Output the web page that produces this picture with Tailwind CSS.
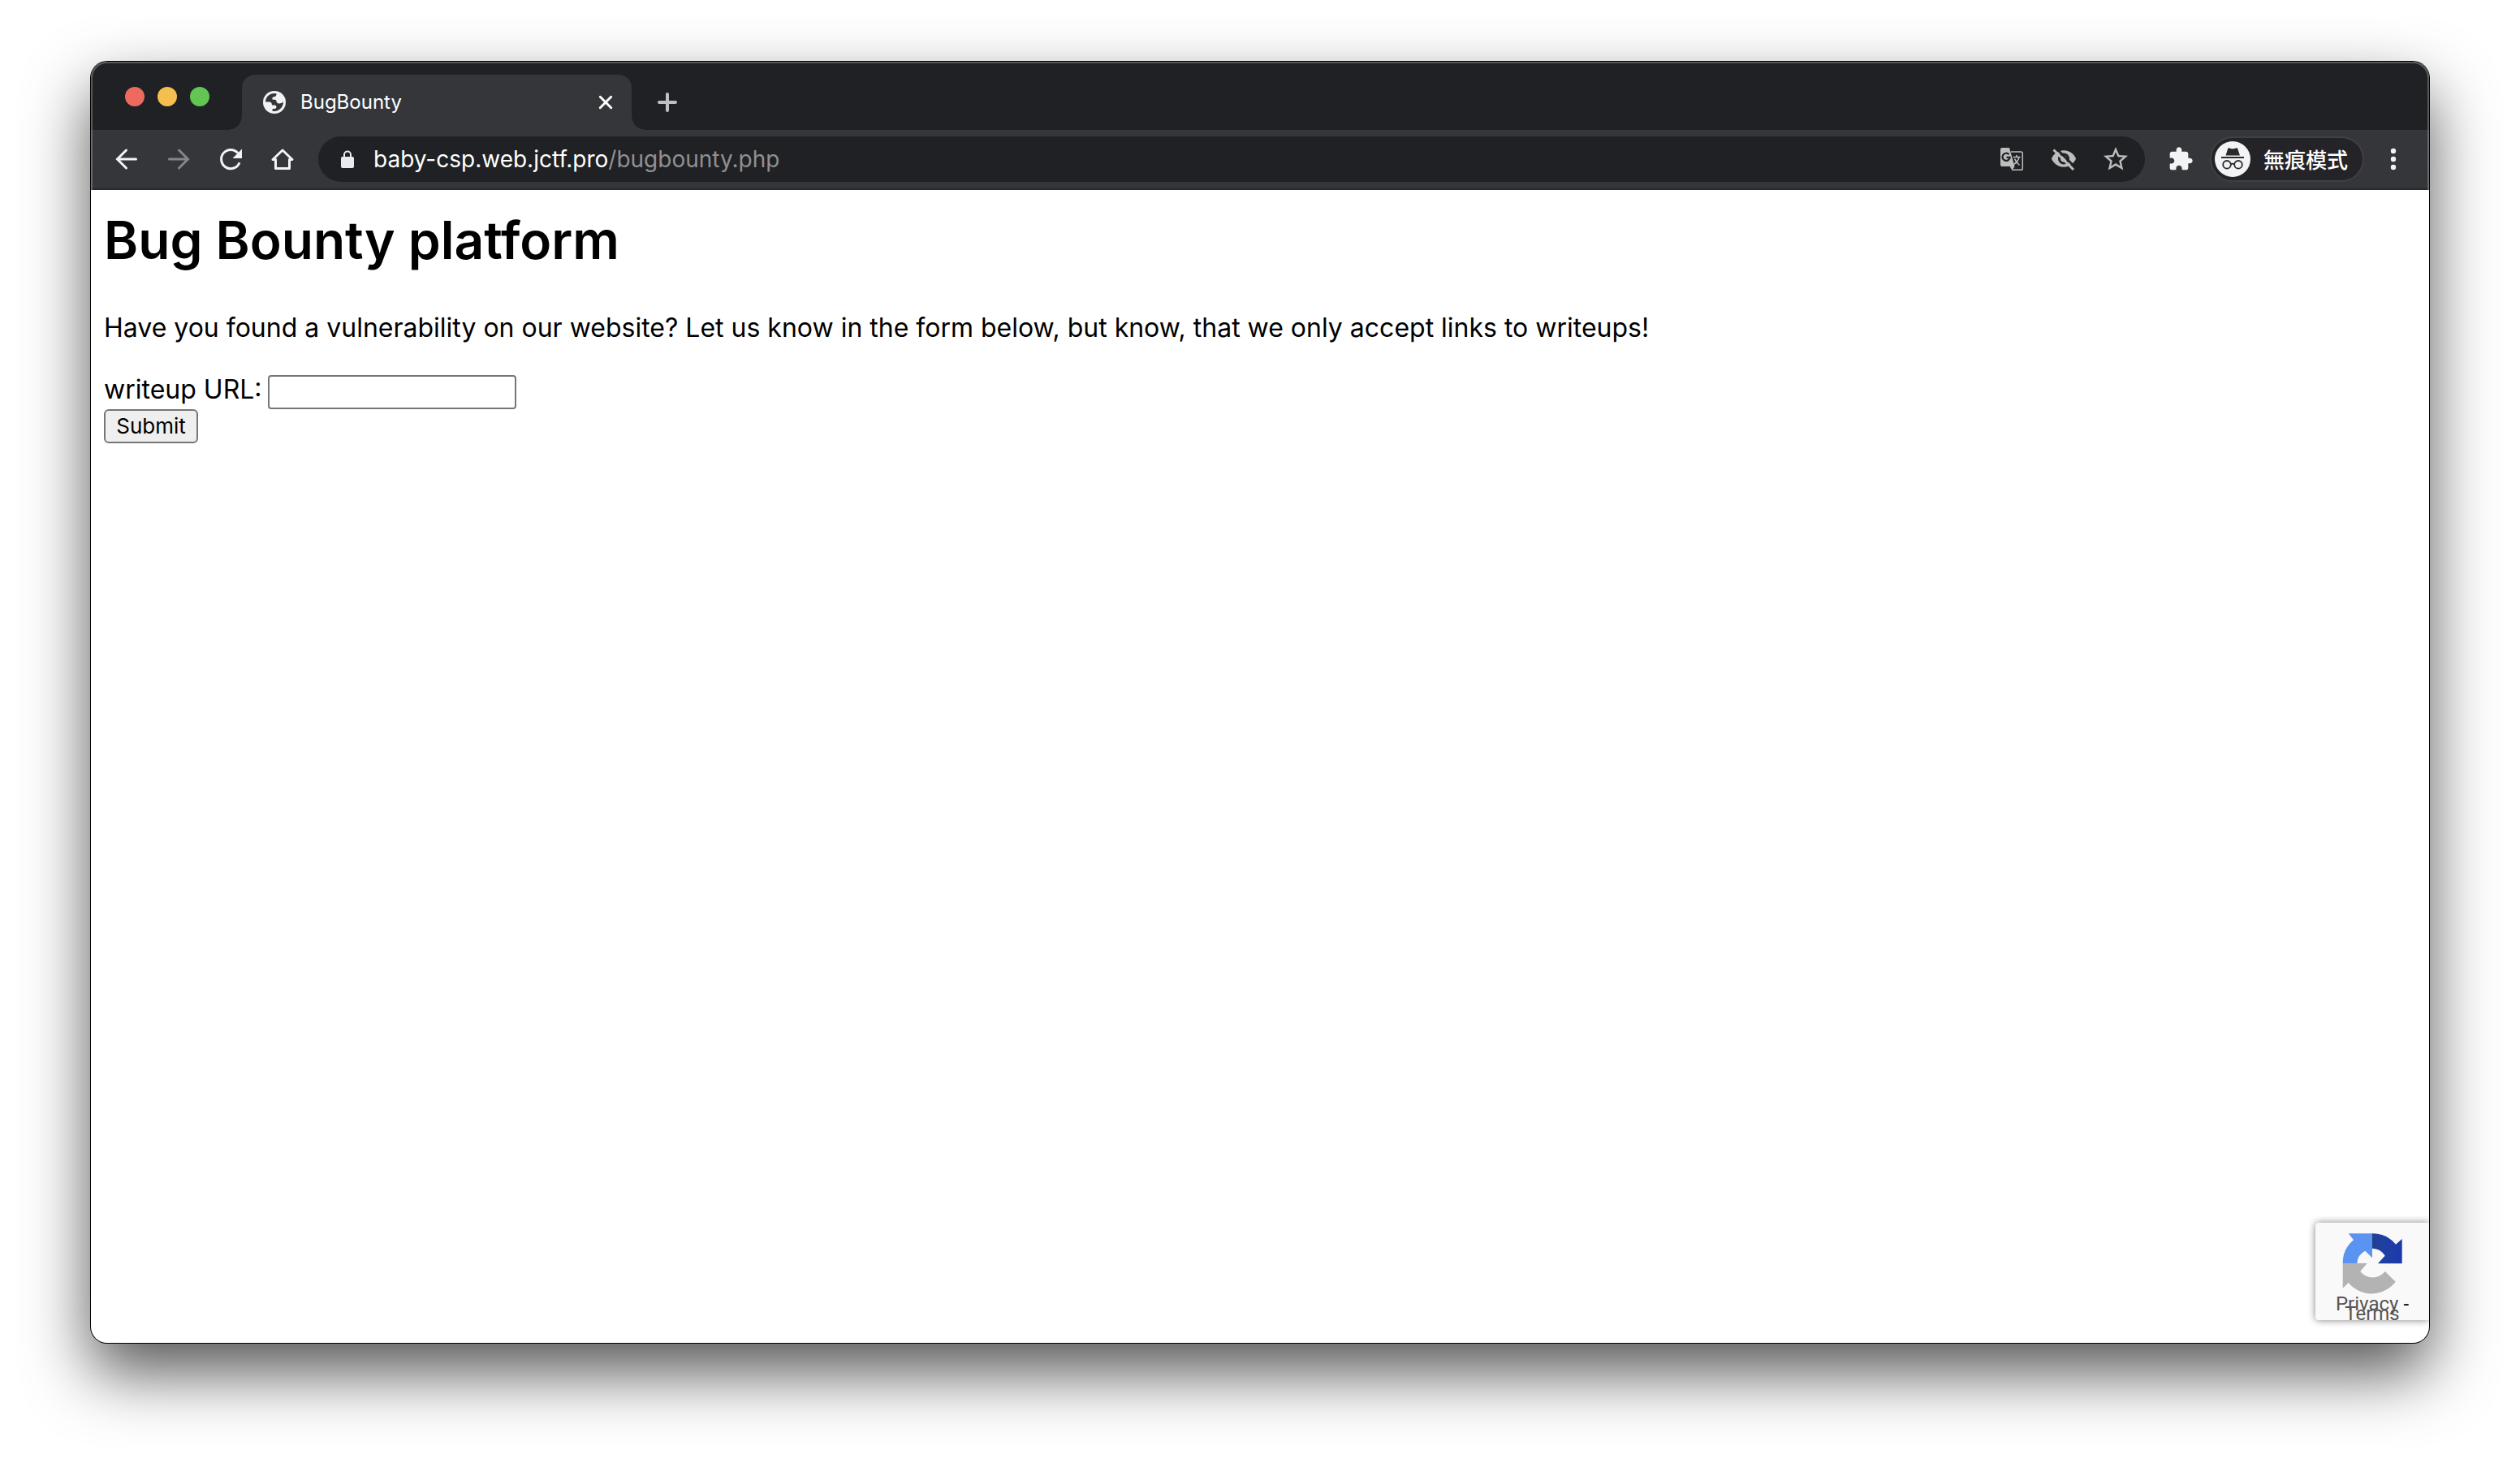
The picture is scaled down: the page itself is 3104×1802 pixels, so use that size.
<!DOCTYPE html>
<html lang="en">
<head>
<meta charset="utf-8">
<title>BugBounty</title>
<script src="https://cdn.jsdelivr.net/npm/@tailwindcss/browser@4"></script>
</head>
<body class="flex min-h-screen flex-col bg-white px-28 pt-[76px] pb-[148px] font-['Inter','Noto_Sans_CJK_TC',sans-serif] text-black">

<div class="relative flex grow flex-col overflow-hidden rounded-[20px] bg-white shadow-[0_0_0_1px_#000,0_36px_80px_rgba(0,0,0,0.67)]">

  <header class="relative">
    <!-- Tab strip -->
    <div class="flex h-[84px] items-center bg-[#202124] pl-[42px]">
      <div class="flex gap-4 pt-0.5">
        <button type="button" aria-label="Close window" class="size-6 rounded-full bg-[#ed6a5e]"></button>
        <button type="button" aria-label="Minimize window" class="size-6 rounded-full bg-[#f5bf4f]"></button>
        <button type="button" aria-label="Zoom window" class="size-6 rounded-full bg-[#62c554]"></button>
      </div>
      <div class="relative ml-10 flex h-[68px] w-[480px] items-center self-end rounded-t-2xl bg-[#35363a] pr-5 pl-[26px]">
        <span class="absolute bottom-0 -left-4 size-4 bg-[radial-gradient(circle_at_0_0,transparent_15px,#35363a_16px)]"></span>
        <span class="absolute -right-4 bottom-0 size-4 bg-[radial-gradient(circle_at_100%_0,transparent_15px,#35363a_16px)]"></span>
        <svg class="size-7" viewBox="0 0 28 28">
          <circle cx="14" cy="14" r="14" fill="#f1f3f4"/>
          <path d="M3 13.6C3 7.600 8 3 14 3L16.500 3.200C16.800 5.600 15.600 7 13.600 7.200C11.800 7.400 11.300 8.200 11.300 10.600L14.500 10.800C16 11 16.400 12 16.600 13.400L18 15.200C20.500 15.800 23 15.400 25 13.600C25 20 20 25 14 25L11.500 24.700V22.300C13 21.900 15.800 22.600 16.400 20.300C16.600 18.600 16 17.600 14.200 17.500L11.500 17.400C10.600 17.200 10.800 15.500 10.200 14.600C9.500 13.700 8 13.600 3 13.600Z" fill="#35363a"/>
        </svg>
        <span class="ml-[18px] grow text-[24px] leading-8 text-white">BugBounty</span>
        <button type="button" aria-label="Close tab" class="size-6">
          <svg class="size-6" viewBox="0 0 24 24" fill="none" stroke="#fff" stroke-width="3" stroke-linecap="round"><path d="M5.300 5.300 18.700 18.700M18.700 5.300 5.300 18.700"/></svg>
        </button>
      </div>
      <button type="button" aria-label="New tab" class="mt-4 ml-[26px] size-9">
        <svg class="size-9" viewBox="0 0 36 36" fill="none" stroke="#bdc1c6" stroke-width="4" stroke-linecap="round"><path d="M18 8V28M8 18H28"/></svg>
      </button>
    </div>

    <!-- Toolbar -->
    <div class="flex h-[74px] items-center border-b-2 border-[#28292c] bg-[#35363a] px-[26px]">
      <nav class="flex gap-7">
        <button type="button" aria-label="Back" class="size-9">
          <svg class="size-9" viewBox="0 0 36 36" fill="none" stroke="#f1f3f4" stroke-width="3" stroke-linecap="round"><path d="M29.500 18H7M17.500 7 6.500 18 17.500 29"/></svg>
        </button>
        <button type="button" aria-label="Forward" class="size-9">
          <svg class="size-9" viewBox="0 0 36 36" fill="none" stroke="#85868a" stroke-width="3" stroke-linecap="round"><path d="M6.500 18H29M18.500 7 29.500 18 18.500 29"/></svg>
        </button>
        <button type="button" aria-label="Reload" class="size-9">
          <svg class="size-9" viewBox="0 0 36 36"><path d="M29 22.200A11.600 11.600 0 1 1 27 10.600" fill="none" stroke="#f1f3f4" stroke-width="3"/><path d="M32 5.500V17H20.500Z" fill="#f1f3f4"/></svg>
        </button>
        <button type="button" aria-label="Home" class="size-9">
          <svg class="size-9" viewBox="0 0 36 36" fill="none" stroke="#f1f3f4" stroke-width="3" stroke-linejoin="round"><path d="M6 18.500 18 7 30 18.500H26.500V29.500H9.500V18.500Z"/></svg>
        </button>
      </nav>

      <div class="ml-[26px] flex h-14 grow items-center rounded-full bg-[#202124] pr-[18px] pl-6">
        <svg class="size-6" viewBox="0 0 24 24"><rect x="4" y="9" width="16" height="14" rx="2" fill="#e8eaed"/><path d="M8 9.500V6.500A4 4 0 0 1 16 6.500V9.500" fill="none" stroke="#e8eaed" stroke-width="2"/></svg>
        <span class="ml-5 grow text-[28px] leading-9 text-white">baby-csp.web.jctf.pro<span class="text-[#8f9093]">/bugbounty.php</span></span>
        <div class="flex gap-7">
          <button type="button" aria-label="Translate this page" class="size-9">
            <svg class="size-9" viewBox="0 0 36 36">
              <path d="M17 9H29.500A1.800 1.800 0 0 1 31.300 10.800V29.500A1.800 1.800 0 0 1 29.500 31.300H19L16.500 27" fill="none" stroke="#bdbdbd" stroke-width="1.500"/>
              <path d="M6 4H15L21.500 27H6A2 2 0 0 1 4 25V6A2 2 0 0 1 6 4Z" fill="#bdbdbd"/>
              <path d="M17 27H21.500L19 31Z" fill="#bdbdbd"/>
              <path d="M14.500 12.200A4.600 4.600 0 1 0 15.700 15.800H11.500" fill="none" stroke="#202124" stroke-width="2.200"/>
              <path d="M19.500 15.500H28.500M23.800 13V15.500M27 15.500C26.200 19.500 23.500 22.500 20.500 24.500M21.500 17.500C22.500 20.500 25 23.500 27.500 25.500" fill="none" stroke="#bdbdbd" stroke-width="1.600"/>
            </svg>
          </button>
          <button type="button" aria-label="Third-party cookies blocked" class="size-9">
            <svg class="size-9" viewBox="0 0 36 36">
              <path d="M3 17.500C5.400 11.500 11.200 7.300 18 7.300S30.600 11.500 33 17.500C30.600 23.500 24.800 27.700 18 27.700S5.400 23.500 3 17.500Z" fill="#bdbdbd"/>
              <circle cx="18" cy="17.500" r="7" fill="#202124"/>
              <circle cx="18" cy="17.500" r="4" fill="#bdbdbd"/>
              <path d="M9 5 33 29" stroke="#202124" stroke-width="3"/>
              <path d="M5.500 6.500 30 31" stroke="#bdbdbd" stroke-width="3"/>
            </svg>
          </button>
          <button type="button" aria-label="Bookmark this tab" class="size-9">
            <svg class="size-9" viewBox="0 0 24 24" fill="#bdbdbd"><path d="M22 9.240l-7.190-.620L12 2 9.190 8.630 2 9.240l5.460 4.730L5.820 21 12 17.270 18.180 21l-1.630-7.030L22 9.240zM12 15.400l-3.760 2.270 1-4.280-3.320-2.880 4.380-.380L12 6.100l1.710 4.040 4.380.380-3.320 2.880 1 4.280L12 15.400z"/></svg>
          </button>
        </div>
      </div>

      <button type="button" aria-label="Extensions" class="ml-[26px] flex size-9 items-center justify-center">
        <svg class="size-8" viewBox="0 0 24 24" fill="#f1f3f4"><path d="M20.500 11H19V7c0-1.100-.900-2-2-2h-4V3.500C13 2.120 11.880 1 10.500 1S8 2.120 8 3.500V5H4c-1.100 0-1.990.900-1.990 2v3.800H3.500c1.490 0 2.700 1.210 2.700 2.700s-1.210 2.700-2.700 2.700H2V20c0 1.100.900 2 2 2h3.800v-1.500c0-1.490 1.210-2.700 2.700-2.700 1.490 0 2.700 1.210 2.700 2.700V22H17c1.100 0 2-.900 2-2v-4h1.500c1.380 0 2.500-1.120 2.500-2.500S21.880 11 20.500 11z"/></svg>
      </button>
      <button type="button" class="ml-[18px] flex h-14 w-[190px] items-center rounded-full border-2 border-[#3f4045] bg-[#242428] pl-1">
        <svg class="size-11" viewBox="0 0 44 44">
          <circle cx="22" cy="22" r="22" fill="#f1f3f4"/>
          <path d="M18 8.500C19.500 9.500 24.500 9.500 26 8.500C27.300 8 28 8.500 28.400 9.700L31 17.500H13.500L16 9.700C16.400 8.500 17 8 18 8.500Z" fill="#28292c"/>
          <path d="M8 20H36" stroke="#28292c" stroke-width="2"/>
          <g fill="none" stroke="#28292c" stroke-width="1.800"><circle cx="15" cy="28.800" r="4.800"/><circle cx="29" cy="28.800" r="4.800"/><path d="M19.800 28.500C21 27.500 23 27.500 24.200 28.500"/></g>
        </svg>
        <span lang="zh-Hant" class="ml-4 font-['Noto_Sans_CJK_TC',sans-serif] text-[26px] leading-9 font-medium text-white">無痕模式</span>
      </button>
      <button type="button" aria-label="Menu" class="ml-[18px] size-9">
        <svg class="size-9" viewBox="0 0 36 36" fill="#f1f3f4"><circle cx="18" cy="8" r="3.200"/><circle cx="18" cy="18" r="3.200"/><circle cx="18" cy="28" r="3.200"/></svg>
      </button>
    </div>

    <!-- Light edge round the title bar -->
    <div class="pointer-events-none absolute inset-0 rounded-t-[20px] border-x-2 border-t-2 border-white/25"></div>
  </header>

  <main class="grow px-4 pt-[22px]">
    <h1 class="text-[64px] leading-[80px] font-semibold">Bug Bounty platform</h1>
    <p class="mt-12 text-[32px] leading-10">Have you found a vulnerability on our website? Let us know in the form below, but know, that we only accept links to writeups!</p>
    <form class="mt-[38px]">
      <div class="flex items-start gap-[7px]">
        <label for="url" class="text-[32px] leading-9">writeup URL:</label>
        <input id="url" name="url" type="text" class="h-[42px] w-[306px] rounded-[4px] border-2 border-[#767676] bg-white px-1 text-[26px]">
      </div>
      <button type="submit" class="block h-[42px] w-[116px] rounded-[6px] border-2 border-[#767676] bg-[#efefef] text-[26px] leading-8">Submit</button>
    </form>
  </main>

  <!-- reCAPTCHA badge, pinned to the corner of the page -->
  <aside class="absolute right-0 bottom-7 h-[120px] w-[140px] overflow-hidden rounded-l-[4px] bg-[#f9f9f9] pt-3 text-center font-['Roboto',sans-serif] text-[24px] leading-3 shadow-[0_0_10px_#808080]">
    <svg class="mx-auto size-[76px]" viewBox="0 0 76 76">
      <defs><linearGradient id="navy" x1="0" x2="1" y1="0" y2="0"><stop offset="0" stop-color="#22408f"/><stop offset=".4" stop-color="#1f3fa5"/><stop offset="1" stop-color="#1c3aa9"/></linearGradient></defs>
      <path d="M8.700 1.300H38V31.300L29.300 22.700A18 18 0 0 0 19.300 38H1.700A37 37 0 0 1 15 9.300Z" fill="#5a94f0"/>
      <path d="M38 1.300A37 37 0 0 1 67 14.700L74.700 8V38.300H45L53.700 28.700A19 19 0 0 0 38 19.700Z" fill="url(#navy)"/>
      <path d="M1.700 38H31.700L23.300 48A19 19 0 0 0 53.700 48L66.700 60.700A37 37 0 0 1 8.700 62L1.700 68.700Z" fill="#b3b3b3"/>
    </svg>
    <div class="mt-1.5"><a href="#privacy" class="text-[#555]">Privacy</a> -</div>
    <div><a href="#terms" class="text-[#555]">Terms</a></div>
  </aside>
</div>
</body>
</html>
